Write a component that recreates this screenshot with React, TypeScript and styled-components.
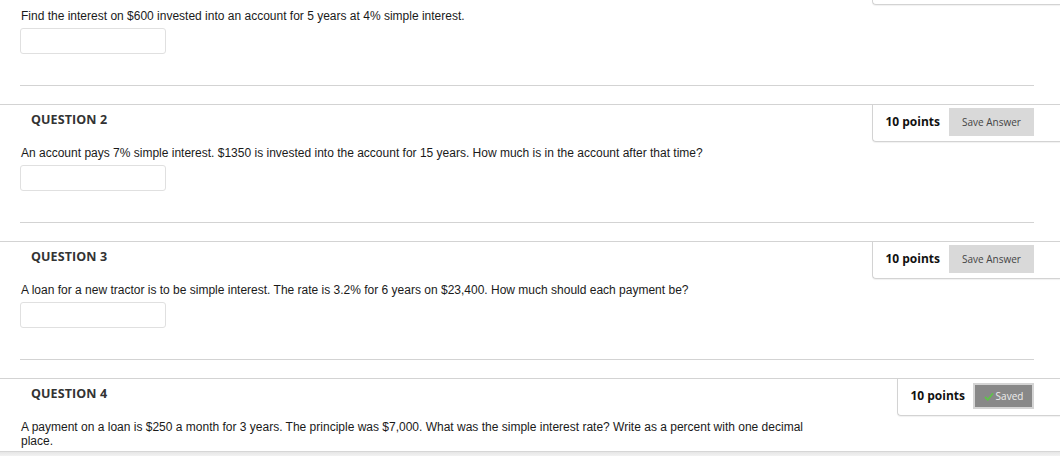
import React from "react";
import styled, { createGlobalStyle } from "styled-components";

const Global = createGlobalStyle`
  html, body { margin: 0; padding: 0; background: #fff; }
  body { font-family: "Liberation Sans", Arial, sans-serif; }
  * { box-sizing: border-box; }
`;

const Page = styled.div`
  width: 1060px;
  height: 456px;
  display: flex;
  flex-direction: column;
  overflow: hidden;
  background: #fff;
`;

const Viewport = styled.div`
  flex: 1;
  overflow: hidden;
`;

const List = styled.div`
  margin-top: -33px;
`;

const Block = styled.div`
  border-top: 1px solid #d3d3d3;
`;

const Header = styled.div`
  display: flex;
  justify-content: space-between;
  align-items: flex-start;
`;

const Title = styled.h3`
  margin: 0;
  padding: 7px 0 0 31px;
  font-family: "Open Sans", sans-serif;
  font-weight: 700;
  font-size: 12.5px;
  line-height: 16px;
  color: #333;
  letter-spacing: 0.1px;
`;

const PointsBox = styled.div<{ $gap: number }>`
  height: 37px;
  display: flex;
  align-items: flex-start;
  gap: ${(p) => p.$gap}px;
  padding: 3px 26px 0 12px;
  border-left: 1px solid #d3d3d3;
  border-bottom: 1px solid #d3d3d3;
  border-bottom-left-radius: 4px;
  box-shadow: 0 1px 1px rgba(0, 0, 0, 0.06);
`;

const Points = styled.span`
  font-family: "Open Sans", sans-serif;
  font-weight: 700;
  font-size: 12px;
  line-height: 28px;
  color: #111;
`;

const SaveButton = styled.button<{ $saved?: boolean }>`
  height: ${(p) => (p.$saved ? "26px" : "28px")};
  width: ${(p) => (p.$saved ? "61px" : "85px")};
  margin-top: ${(p) => (p.$saved ? "1px" : "0")};
  display: flex;
  align-items: center;
  justify-content: center;
  gap: 2px;
  padding: 0;
  font-family: "Open Sans", sans-serif;
  font-size: 10px;
  color: ${(p) => (p.$saved ? "#eee" : "#444")};
  background: ${(p) => (p.$saved ? "#888" : "#d9d9d9")};
  border: ${(p) => (p.$saved ? "2px solid #d4d4d4" : "none")};
  border-radius: 0;
  cursor: pointer;
`;

const Body = styled.div`
  padding: 4px 26px 0 20px;
`;

const Text = styled.p`
  margin: 0 0 5px 1px;
  max-width: 785px;
  font-size: 12px;
  line-height: 14px;
  color: #1a1a1a;
`;

const Answer = styled.input`
  display: block;
  width: 146px;
  height: 26px;
  border: 1px solid #e0e0e0;
  border-radius: 3px;
  background: #fff;
  outline: none;
`;

const Divider = styled.hr`
  margin: 31px 0 18px;
  border: none;
  border-top: 1px solid #d3d3d3;
`;

const Footer = styled.div`
  height: 5px;
  flex: none;
  border-top: 1px solid #d6d6d6;
  background: linear-gradient(#e6e6e6, #f2f2f2);
`;

const Check = () => (
  <svg width="10" height="9" viewBox="0 0 10 9">
    <path d="M1 5 L3.8 7.8 L9 1.2" fill="none" stroke="#5fc24a" strokeWidth="1.8" />
  </svg>
);

type Q = { n: number; text: string; saved?: boolean };

const questions: Q[] = [
  { n: 1, text: "Find the interest on $600 invested into an account for 5 years at 4% simple interest." },
  { n: 2, text: "An account pays 7% simple interest. $1350 is invested into the account for 15 years. How much is in the account after that time?" },
  { n: 3, text: "A loan for a new tractor is to be simple interest. The rate is 3.2% for 6 years on $23,400. How much should each payment be?" },
  { n: 4, text: "A payment on a loan is $250 a month for 3 years. The principle was $7,000. What was the simple interest rate? Write as a percent with one decimal place.", saved: true },
];

export default function App() {
  return (
    <Page>
      <Global />
      <Viewport>
        <List>
          {questions.map((q) => (
            <Block key={q.n}>
              <Header>
                <Title>QUESTION {q.n}</Title>
                <PointsBox $gap={q.saved ? 8 : 9}>
                  <Points>10 points</Points>
                  {q.saved ? (
                    <SaveButton $saved>
                      <Check />
                      Saved
                    </SaveButton>
                  ) : (
                    <SaveButton>Save Answer</SaveButton>
                  )}
                </PointsBox>
              </Header>
              <Body>
                <Text>{q.text}</Text>
                <Answer type="text" aria-label={`Answer ${q.n}`} />
                <Divider />
              </Body>
            </Block>
          ))}
        </List>
      </Viewport>
      <Footer />
    </Page>
  );
}
